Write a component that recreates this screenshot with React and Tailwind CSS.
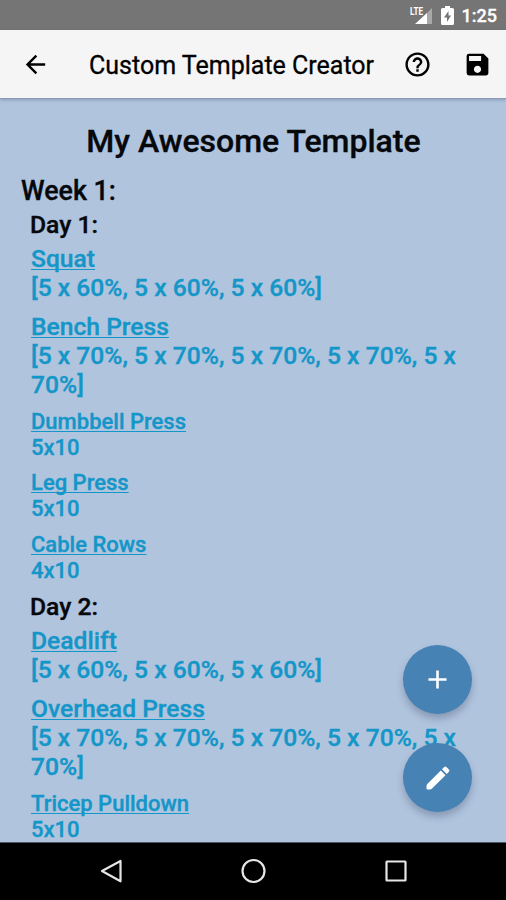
import { MdArrowBack, MdHelpOutline, MdSave, MdAdd } from 'react-icons/md';

const days = [
  {
    name: 'Day 1:',
    main: [
      { name: 'Squat', sets: '[5 x 60%, 5 x 60%, 5 x 60%]' },
      { name: 'Bench Press', sets: '[5 x 70%, 5 x 70%, 5 x 70%, 5 x 70%, 5 x 70%]' },
    ],
    accessories: [
      { name: 'Dumbbell Press', sets: '5x10' },
      { name: 'Leg Press', sets: '5x10' },
      { name: 'Cable Rows', sets: '4x10' },
    ],
  },
  {
    name: 'Day 2:',
    main: [
      { name: 'Deadlift', sets: '[5 x 60%, 5 x 60%, 5 x 60%]' },
      { name: 'Overhead Press', sets: '[5 x 70%, 5 x 70%, 5 x 70%, 5 x 70%, 5 x 70%]' },
    ],
    accessories: [{ name: 'Tricep Pulldown', sets: '5x10' }],
  },
];

function StatusBar() {
  return (
    <div className="h-[30px] shrink-0 bg-[#757575] flex items-center justify-end pr-[9px] text-white">
      <svg width="23" height="20" viewBox="0 0 23 20" className="mr-2">
        <path d="M22 3V19H6Z" fill="#a9a9a9" />
        <path d="M17 8V19H5Z" fill="#fff" />
        <text x="0" y="9.5" fontSize="10.5" fontWeight="700" fill="#fff" stroke="#757575" strokeWidth="2" paintOrder="stroke" textLength="13" lengthAdjust="spacingAndGlyphs">LTE</text>
      </svg>
      <svg width="13" height="19" viewBox="0 0 13 19" className="mr-2">
        <path d="M4 0H9V2H11.500Q13 2 13 3.500V17.500Q13 19 11.500 19H1.500Q0 19 0 17.500V3.500Q0 2 1.500 2H4Z" fill="#fff" />
        <path d="M7.500 5L3 11.500H6V16L10 9.500H7.500Z" fill="#757575" />
      </svg>
      <span className="text-[18px] leading-none font-medium pt-[2px] [-webkit-text-stroke:0.3px]">1:25</span>
    </div>
  );
}

function Header() {
  return (
    <header className="h-[69px] shrink-0 bg-[#f5f5f5] border-b border-[#8b9bb3] flex items-center text-black relative shadow-[0_1px_3px_rgba(60,80,120,0.35)]">
      <MdArrowBack className="w-[29px] h-[29px] ml-[21px]" />
      <h1 className="ml-[39px] w-[284px] pt-1 text-[25px] leading-[30px] font-normal whitespace-nowrap [-webkit-text-stroke:0.3px]">Custom Template Creator</h1>
      <MdHelpOutline className="w-[29px] h-[29px] ml-[30px]" />
      <MdSave className="w-[29px] h-[29px] ml-[31px]" />
    </header>
  );
}

function Exercise({ name, sets, small }) {
  return (
    <div className={small ? 'text-[22px] leading-[25.7px] mb-[10px]' : 'text-[24.65px] leading-[29px] mb-[10px]'}>
      <p className="underline decoration-1 underline-offset-2 [text-decoration-skip-ink:none]">{name}</p>
      <p>{sets}</p>
    </div>
  );
}

function NavBar() {
  return (
    <nav className="h-[58px] shrink-0 bg-black relative border-t border-[#4d5664]">
      <svg width="506" height="57" viewBox="0 0 506 57" fill="none" stroke="#e6e6e6" strokeWidth="2.2">
        <path d="M102 28L120.500 18V38.300Z" strokeLinejoin="round" />
        <circle cx="253.500" cy="28" r="11" />
        <rect x="386.500" y="18.500" width="19" height="19" rx="0.500" />
      </svg>
    </nav>
  );
}

export default function App() {
  return (
    <div className="w-[506px] h-[900px] flex flex-col overflow-hidden bg-[#b0c4de] font-[Roboto,sans-serif]">
      <StatusBar />
      <Header />
      <div className="relative flex-1 min-h-0">
        <main className="h-full overflow-hidden pt-[23px] font-medium [-webkit-text-stroke:0.35px]">
          <h2 className="text-center text-[32px] leading-[38px] pl-px text-[#06080b]">My Awesome Template</h2>
          <h3 className="mt-[14px] pb-px pl-[21px] text-[26.8px] leading-[34px] text-[#06080b]">Week 1:</h3>
          <div className="pl-[31px] pr-10 text-[#1496c8]">
            {days.map((day) => (
              <section key={day.name}>
                <h4 className="text-[24.7px] leading-[32px] pb-[3px] -ml-px text-[#06080b]">{day.name}</h4>
                {day.main.map((ex) => (
                  <Exercise key={ex.name} {...ex} />
                ))}
                <div className="-mb-[2px]">
                  {day.accessories.map((ex) => (
                    <Exercise key={ex.name} {...ex} small />
                  ))}
                </div>
              </section>
            ))}
          </div>
        </main>
        {/* floating buttons */}
        <div className="absolute right-[34px] bottom-[30px] flex flex-col gap-[29px] text-white">
          <button className="w-[69px] h-[69px] rounded-full bg-[#4682b4] flex items-center justify-center shadow-[0_5px_7px_rgba(50,60,90,0.3)]">
            <MdAdd className="w-[31px] h-[31px] mb-px" />
          </button>
          <button className="w-[69px] h-[69px] rounded-full bg-[#4682b4] flex items-center justify-center shadow-[0_5px_7px_rgba(50,60,90,0.3)]">
            <svg width="24" height="24" viewBox="0 0 24 24" fill="currentColor">
              <path d="M14.800 4.500L19.500 9.200L5.800 22.700Q5 23.500 4 23.500H1.500Q0.500 23.500 0.500 22.500V20Q0.500 18.800 1.300 18Z" />
              <path d="M16 3.300L18.200 1.100Q19.300 0 20.400 1.100L22.900 3.600Q24 4.700 22.900 5.800L20.700 8Z" />
            </svg>
          </button>
        </div>
      </div>
      <NavBar />
    </div>
  );
}
